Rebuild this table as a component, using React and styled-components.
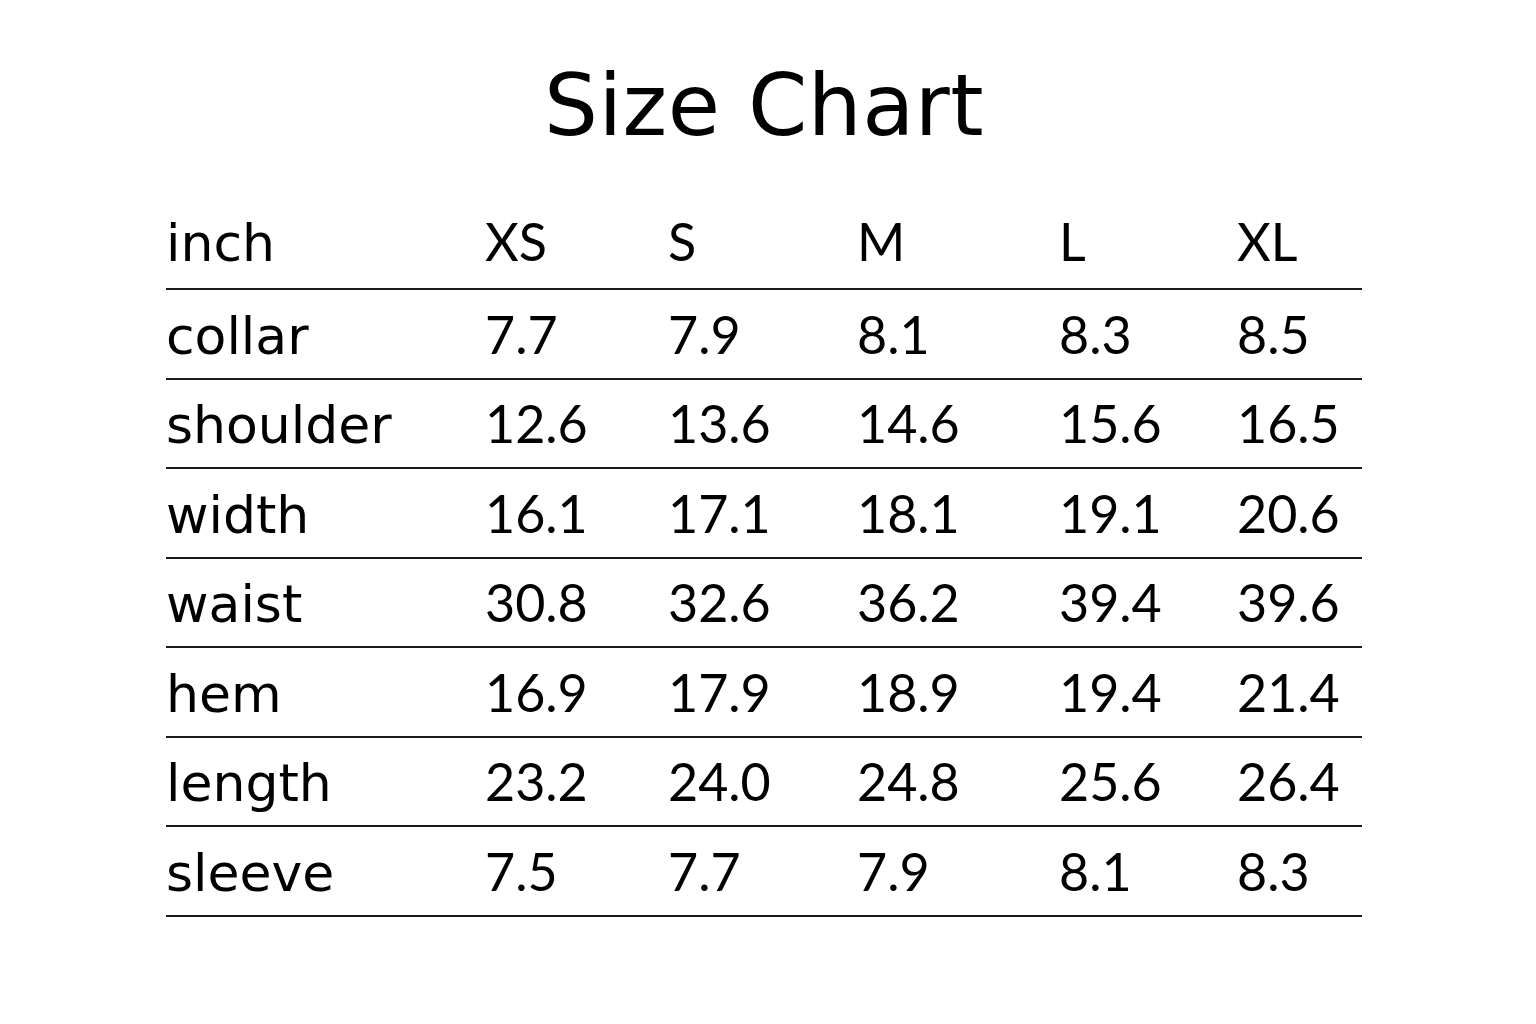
import React from "react";
import styled, { createGlobalStyle } from "styled-components";

const Global = createGlobalStyle`
  html, body { margin: 0; padding: 0; background: #ffffff; }
  body { font-family: "DejaVu Sans", Lato, sans-serif; color: #000; }
`;

const Page = styled.div`
  width: 1536px;
  height: 1024px;
  box-sizing: border-box;
  padding-top: 56px;
  display: flex;
  flex-direction: column;
  align-items: center;
`;

const Title = styled.h1`
  margin: 0;
  font-family: "DejaVu Sans", sans-serif;
  font-size: 85px;
  font-weight: 400;
  letter-spacing: 0.5px;
  line-height: 100px;
  height: 100px;
  transform: translateX(-4px);
`;

const Table = styled.div`
  margin-top: 44px;
  margin-right: 8px;
  width: 1196px;
  display: flex;
  flex-direction: column;
`;

const Row = styled.div`
  display: grid;
  grid-template-columns: 319px 183px 189px 202px 178px 1fr;
  height: ${(p) => (p.$header ? "88px" : "87.5px")};
  align-items: center;
  border-bottom: 2px solid #1a1a1a;
  box-sizing: content-box;
`;

const Cell = styled.div`
  font-family: ${(p) => (p.$label ? '"DejaVu Sans", sans-serif' : 'Lato, "Noto Sans", sans-serif')};
  font-size: 52px;
  font-weight: 400;
  line-height: 1;
  padding-top: ${(p) => (p.$label ? "4px" : "0")};
  margin-top: ${(p) => (p.$header ? "-6px" : "0")};
  white-space: nowrap;
`;

const header = ["inch", "XS", "S", "M", "L", "XL"];
const rows = [
  ["collar", "7.7", "7.9", "8.1", "8.3", "8.5"],
  ["shoulder", "12.6", "13.6", "14.6", "15.6", "16.5"],
  ["width", "16.1", "17.1", "18.1", "19.1", "20.6"],
  ["waist", "30.8", "32.6", "36.2", "39.4", "39.6"],
  ["hem", "16.9", "17.9", "18.9", "19.4", "21.4"],
  ["length", "23.2", "24.0", "24.8", "25.6", "26.4"],
  ["sleeve", "7.5", "7.7", "7.9", "8.1", "8.3"],
];

export default function App() {
  return (
    <>
      <Global />
      <Page>
        <Title>Size Chart</Title>
        <Table>
          <Row $header>
            {header.map((h, i) => (
              <Cell key={h} $header $label={i === 0}>{h}</Cell>
            ))}
          </Row>
          {rows.map((r) => (
            <Row key={r[0]}>
              {r.map((c, i) => (
                <Cell key={i} $label={i === 0}>{c}</Cell>
              ))}
            </Row>
          ))}
        </Table>
      </Page>
    </>
  );
}
